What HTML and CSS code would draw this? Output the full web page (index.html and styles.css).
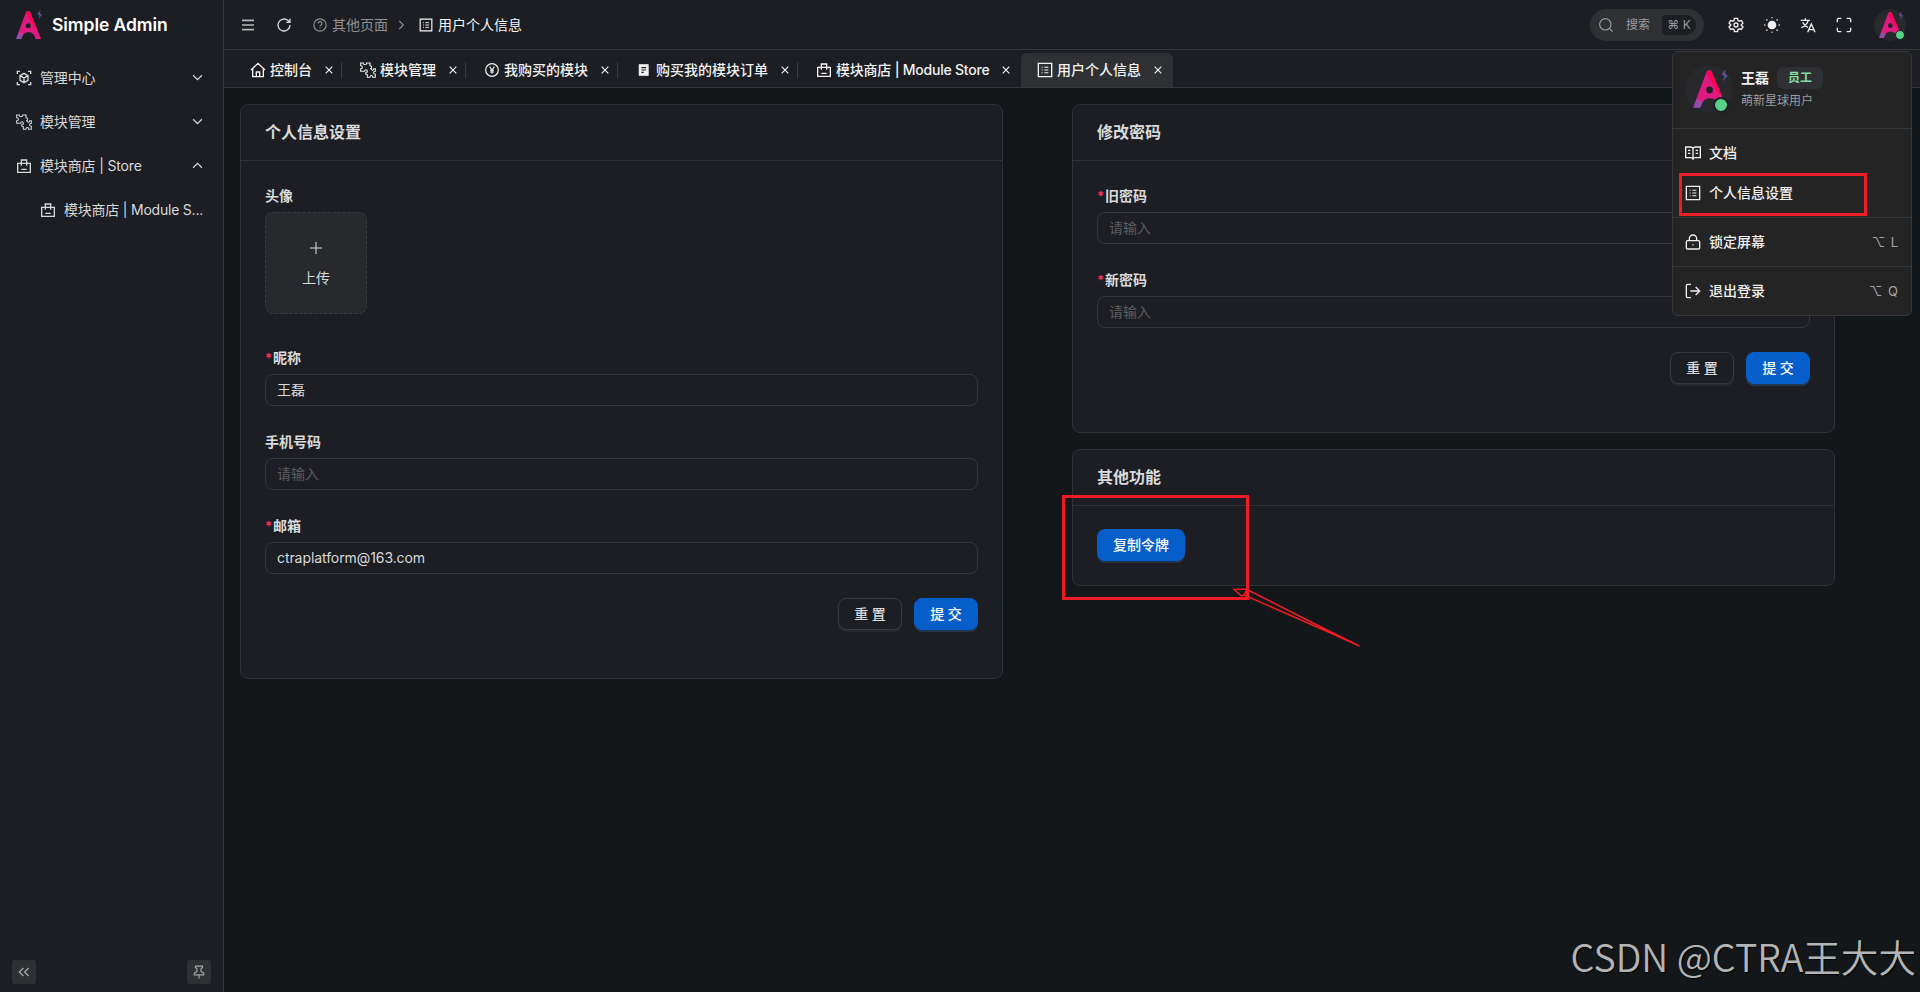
FILE: index.html
```
<!DOCTYPE html>
<html lang="zh-CN">
<head>
  <meta charset="UTF-8" />
  <meta name="viewport" content="width=device-width, initial-scale=1" />
  <title>用户个人信息 - Simple Admin</title>
  <link rel="stylesheet" href="styles.css">
</head>
<body>

<!-- icons -->
<svg class="sprite" width="0" height="0">
  <linearGradient id="logoFill" x1="0" y1="1" x2=".35" y2="0">
    <stop offset="0" stop-color="#8a4fb0" />
    <stop offset=".22" stop-color="#a04aa5" />
    <stop offset=".24" stop-color="#dd1c80" />
    <stop offset="1" stop-color="#e0187c" />
  </linearGradient>
  <symbol id="logo" viewBox="0 0 26 30">
    <path d="M10 2Q12 0 14 2L25 29H19.5Q18 22 12.5 22T5.500 29H0Z" fill="url(#logoFill)" />
    <path d="M10 3Q12 0 14 2L22 21Q18 18 16 13Z" fill="#fb0552" />
    <circle cx="12.300" cy="15.700" r="2.500" fill="#1f2024" />
    <path d="M24.500 0L21.300 4L23.500 5.500L22 9.500L26 4.800L23.800 3.500Z" fill="#5a5098" />
  </symbol>
  <symbol id="cube" viewBox="0 0 24 24"><path d="M2 6V2h4M18 2h4v4M22 18v4h-4M6 22H2v-4M12 5l6 3.500v7L12 19l-6-3.500v-7zM6 8.500l6 3.500 6-3.500M12 12v7" /></symbol>
  <symbol id="puzzle" viewBox="0 0 24 24"><path d="M1 1.500h4c0 3.500 5 3.500 5 0h5v4c3.500 0 3.500 4.500 0 4.500h2c0 3 3.500 3 3.500 0H23v4c-3.500 0-3.500 4.500 0 4.500V23h-4c0-3.500-4-3.500-4 0h-4v-4c-3.500 0-3.500-4 0-4v-1c0-3-4-3-4 0H1v-4c3.500 0 3.500-4.500 0-4.500z" stroke-width="1.600" /></symbol>
  <symbol id="bag" viewBox="0 0 24 24"><path d="M2.500 8h19v13.500h-19zM8 11.500V3h8v8.500M8 17h8" /></symbol>
  <symbol id="down" viewBox="0 0 24 24"><path d="M5 8.500l7 7 7-7" /></symbol>
  <symbol id="up" viewBox="0 0 24 24"><path d="M5 15.500l7-7 7 7" /></symbol>
  <symbol id="right" viewBox="0 0 24 24"><path d="M9 5l7 7-7 7" /></symbol>
  <symbol id="menu" viewBox="0 0 24 24"><path d="M3 5h18M3 12h18M3 19h18" stroke-width="2.400" /></symbol>
  <symbol id="refresh" viewBox="0 0 24 24"><path d="M21 12a9 9 0 1 1-3-6.700L21 8M21 2.500V8h-5.500" /></symbol>
  <symbol id="question" viewBox="0 0 24 24"><circle cx="12" cy="12" r="10.500" /><path d="M8.800 9.500a3.200 3.200 0 1 1 4.700 2.800q-1.500.8-1.500 2.200M12 16.500v1.500" /></symbol>
  <symbol id="profile" viewBox="0 0 24 24"><path d="M2 2h20v20H2z" /><path d="M7 8h1.500M7 12h1.500M7 16h1.500M11 8h6M11 12h6M11 16h6" stroke-width="1.600" /></symbol>
  <symbol id="home" viewBox="0 0 24 24"><path d="M1.500 12L12 2l10.500 10M4 10v12h16V10M9.500 22v-7h5v7" /></symbol>
  <symbol id="yen" viewBox="0 0 24 24"><circle cx="12" cy="12" r="9.500" stroke-width="1.800" /><path d="M8.500 7l3.500 5 3.500-5M12 12v5.500M9 12.500h6M9 15h6" stroke-width="1.600" /></symbol>
  <symbol id="order" viewBox="0 0 24 24"><path d="M4 3h15v18H4z" fill="currentColor" /><path d="M7.500 8h8M7.500 12h8M7.500 16h4" stroke="#1c1e23" /></symbol>
  <symbol id="close" viewBox="0 0 24 24"><path d="M4 4l16 16M20 4L4 20" stroke-width="2.800" /></symbol>
  <symbol id="search" viewBox="0 0 24 24"><circle cx="11" cy="11" r="8.500" /><path d="M17 17l5 5" /></symbol>
  <symbol id="gear" viewBox="0 0 24 24"><path d="M9.700 2h4.600l.7 3.200 2 1.100 3.100-1 2.300 4-2.400 2.200v1l2.400 2.200-2.300 4-3.100-1-2 1.100-.7 3.200H9.700L9 18.800l-2-1.100-3.100 1-2.300-4L4 12.500v-1L1.600 9.300l2.300-4 3.100 1 2-1.100z" /><circle cx="12" cy="12" r="3" /></symbol>
  <symbol id="sun" viewBox="0 0 24 24"><circle cx="12" cy="12" r="6.500" fill="currentColor" stroke="none" /><path d="M12 1v.3M12 22.700v.3M1 12h.3M22.700 12h.3M4.200 4.200l.3.300M19.500 19.500l.3.300M4.200 19.800l.3-.3M19.500 4.500l.3-.3" stroke-linecap="round" /></symbol>
  <symbol id="lang" viewBox="0 0 24 24"><path d="M1 5h14M8 2v3M12.500 5C11 10 7 14 2 16M4 8c2 4 5 6 8 7.500M11.500 23L17 10.500 22.500 23M13.500 19h7" /></symbol>
  <symbol id="full" viewBox="0 0 24 24"><path d="M2 8V4a2 2 0 0 1 2-2h4M16 2h4a2 2 0 0 1 2 2v4M22 16v4a2 2 0 0 1-2 2h-4M8 22H4a2 2 0 0 1-2-2v-4" /></symbol>
  <symbol id="book" viewBox="0 0 24 24"><path d="M12 5v17M12 5C11 3 9 3 8 3H1v16h8q2 0 3 2 1-2 3-2h8V3h-7c-1 0-3 0-4 2M4.500 8H8M4.500 12.500H8M16 8h3.500M16 12.500h3.500" /></symbol>
  <symbol id="lock" viewBox="0 0 24 24"><rect x="2" y="10" width="20" height="12.500" rx="2" /><path d="M6.500 10V7a5.500 5.500 0 0 1 11 0v3M12 15.200v2" /></symbol>
  <symbol id="logout" viewBox="0 0 24 24"><path d="M9 2H4a2 2 0 0 0-2 2v16a2 2 0 0 0 2 2h5M8 12h14M16 6l6 6-6 6" /></symbol>
  <symbol id="collapse" viewBox="0 0 24 24"><path d="M11 5l-7 7 7 7M20 5l-7 7 7 7" stroke-width="2.400" /></symbol>
  <symbol id="pin" viewBox="0 0 24 24"><path d="M12 17v6M6 2h12v2.500l-2.500 1.500v5L20 14v3H4v-3l4.500-3V6L6 4.500z" /></symbol>
  <symbol id="plus" viewBox="0 0 24 24"><path d="M12 3v18M3 12h18" /></symbol>
</svg>

<div class="layout">
  <aside class="sidebar">
    <div class="brand">
      <svg><use href="#logo" /></svg>
      <span>Simple Admin</span>
    </div>
    <ul class="menu">
      <li><svg class="icon"><use href="#cube" /></svg><span>管理中心</span><svg class="icon arrow"><use href="#down" /></svg></li>
      <li><svg class="icon"><use href="#puzzle" /></svg><span>模块管理</span><svg class="icon arrow"><use href="#down" /></svg></li>
      <li><svg class="icon"><use href="#bag" /></svg><span>模块商店 | Store</span><svg class="icon arrow"><use href="#up" /></svg></li>
      <li class="sub"><svg class="icon"><use href="#bag" /></svg><span>模块商店 | Module S...</span></li>
    </ul>
    <div class="sidebar-footer">
      <button><svg class="icon"><use href="#collapse" /></svg></button>
      <button><svg class="icon"><use href="#pin" /></svg></button>
    </div>
  </aside>

  <div class="main">
    <header class="header">
      <svg class="icon toggle"><use href="#menu" /></svg>
      <svg class="icon reload"><use href="#refresh" /></svg>
      <div class="breadcrumb">
        <svg class="icon"><use href="#question" /></svg>
        <span>其他页面</span>
        <svg class="icon sep"><use href="#right" /></svg>
        <svg class="icon current"><use href="#profile" /></svg>
        <span class="current">用户个人信息</span>
      </div>
      <div class="tools">
        <div class="search">
          <svg class="icon"><use href="#search" /></svg>
          <span>搜索</span>
          <kbd>⌘ K</kbd>
        </div>
        <svg class="icon"><use href="#gear" /></svg>
        <svg class="icon"><use href="#sun" /></svg>
        <svg class="icon"><use href="#lang" /></svg>
        <svg class="icon"><use href="#full" /></svg>
        <div class="avatar"><svg><use href="#logo" /></svg><i></i></div>
      </div>
    </header>

    <nav class="tabs">
      <div class="tab"><svg class="icon"><use href="#home" /></svg><span>控制台</span><svg class="icon x"><use href="#close" /></svg></div>
      <div class="tab"><svg class="icon"><use href="#puzzle" /></svg><span>模块管理</span><svg class="icon x"><use href="#close" /></svg></div>
      <div class="tab"><svg class="icon"><use href="#yen" /></svg><span>我购买的模块</span><svg class="icon x"><use href="#close" /></svg></div>
      <div class="tab"><svg class="icon small"><use href="#order" /></svg><span>购买我的模块订单</span><svg class="icon x"><use href="#close" /></svg></div>
      <div class="tab last"><svg class="icon"><use href="#bag" /></svg><span class="store">模块商店 | Module Store</span><svg class="icon x"><use href="#close" /></svg></div>
      <div class="tab active"><svg class="icon"><use href="#profile" /></svg><span>用户个人信息</span><svg class="icon x"><use href="#close" /></svg></div>
    </nav>

    <main class="content">
      <section class="card profile">
        <h2>个人信息设置</h2>
        <div class="card-body">
          <label>头像</label>
          <div class="upload">
            <svg class="icon"><use href="#plus" /></svg>
            <span>上传</span>
          </div>
          <label class="required">昵称</label>
          <input type="text" value="王磊">
          <label>手机号码</label>
          <input type="text" placeholder="请输入">
          <label class="required">邮箱</label>
          <input type="text" value="ctraplatform@163.com">
          <div class="actions">
            <button class="btn">重 置</button>
            <button class="btn primary">提 交</button>
          </div>
        </div>
      </section>

      <div class="column">
        <section class="card password">
          <h2>修改密码</h2>
          <div class="card-body">
            <label class="required">旧密码</label>
            <input type="text" placeholder="请输入">
            <label class="required">新密码</label>
            <input type="text" placeholder="请输入">
            <div class="actions">
              <button class="btn">重 置</button>
              <button class="btn primary">提 交</button>
            </div>
          </div>
        </section>
        <section class="card other">
          <h2>其他功能</h2>
          <div class="card-body">
            <button class="btn primary copy">复制令牌</button>
          </div>
        </section>
      </div>
    </main>
  </div>
</div>

<!-- user dropdown -->
<div class="dropdown">
  <div class="user">
    <div class="avatar big"><svg><use href="#logo" /></svg><i></i></div>
    <div class="user-info">
      <div class="name">王磊<span class="badge">员工</span></div>
      <p>萌新星球用户</p>
    </div>
  </div>
  <div class="group">
    <div class="item"><svg class="icon"><use href="#book" /></svg>文档</div>
    <div class="item"><svg class="icon"><use href="#profile" /></svg>个人信息设置</div>
  </div>
  <div class="group">
    <div class="item"><svg class="icon"><use href="#lock" /></svg>锁定屏幕<kbd>⌥ L</kbd></div>
  </div>
  <div class="group">
    <div class="item"><svg class="icon"><use href="#logout" /></svg>退出登录<kbd>⌥ Q</kbd></div>
  </div>
</div>

<!-- annotations -->
<div class="mark mark-menu"></div>
<div class="mark mark-copy"></div>
<svg class="mark-arrow" viewBox="0 0 130 62">
  <path d="M128.500 58L95 43 13 7M128.500 58L88 38 17 2M13 7L10.500 8 3 1.500 16 1 14.500 4Z" />
</svg>
<div class="watermark">CSDN @CTRA王大大</div>

</body>
</html>
```

FILE: styles.css
```
* {
  box-sizing: border-box;
}
body {
  margin: 0;
  height: 992px;
  overflow: hidden;
  position: relative;
  background: #13171a;
  color: #d9dadb;
  font-family: Inter, "Noto Sans CJK SC", sans-serif;
  font-size: 14px;
  line-height: 20px;
}
button, input {
  font-family: inherit;
  font-size: 14px;
}
.sprite {
  position: absolute;
}
.icon {
  width: 16px;
  height: 16px;
  flex: none;
  fill: none;
  stroke: currentColor;
  stroke-width: 2;
}
.layout {
  display: flex;
  height: 100%;
}

/* sidebar */
.sidebar {
  width: 224px;
  flex: none;
  display: flex;
  flex-direction: column;
  background: #1c1e23;
  border-right: 1px solid #36373c;
}
.brand {
  height: 50px;
  display: flex;
  align-items: center;
  gap: 10px;
  padding-left: 16px;
  color: #fff;
  font-size: 17.500px;
  font-weight: 600;
  letter-spacing: -0.060px;
}
.brand svg {
  width: 26px;
  height: 30px;
}
.menu {
  list-style: none;
  margin: 6px 0 0;
  padding: 0 0 1px;
  color: #d8d9db;
}
.menu li {
  height: 44px;
  display: flex;
  align-items: center;
  gap: 8px;
  padding: 0 18px 1px 16px;
  letter-spacing: -0.150px;
}
.menu span {
  flex: 1;
  white-space: nowrap;
}
.menu .arrow {
  width: 15px;
  height: 15px;
}
.menu .sub {
  padding-left: 40px;
  padding-right: 0;
  letter-spacing: -0.220px;
}
.sidebar-footer {
  margin-top: auto;
  padding: 0 12px 8px;
  display: flex;
  justify-content: space-between;
}
.sidebar-footer button {
  width: 24px;
  height: 24px;
  padding: 0;
  display: flex;
  align-items: center;
  justify-content: center;
  border: none;
  border-radius: 3px;
  background: #2e3033;
  color: #a3a4a7;
}
.sidebar-footer .icon {
  width: 14px;
  height: 14px;
}

/* header */
.main {
  flex: 1;
  min-width: 0;
}
.header {
  height: 50px;
  display: flex;
  align-items: center;
  padding: 0 14px 0 16px;
  background: #1c1e23;
  border-bottom: 1px solid #36373c;
}
.header .toggle {
  margin-right: 20px;
  color: #b4b5b7;
}
.header .reload {
  margin-right: 21px;
}
.breadcrumb {
  display: flex;
  align-items: center;
  gap: 5px;
  color: #8f9093;
}
.breadcrumb .icon {
  width: 14px;
  height: 14px;
}
.breadcrumb .sep {
  margin: 0 6px 0 1px;
}
.breadcrumb .current {
  color: #f5f5f5;
}
.tools {
  margin-left: auto;
  display: flex;
  align-items: center;
  gap: 20px;
  color: #eee;
}
.search {
  display: flex;
  align-items: center;
  width: 114px;
  height: 32px;
  margin-right: 4px;
  padding: 0 8px;
  border-radius: 16px;
  background: #2e3033;
  color: #9b9c9f;
  font-size: 12px;
}
.search span {
  margin: 0 12px;
  white-space: nowrap;
}
.search .icon {
  stroke-width: 1.800;
}
kbd {
  font-family: Inter, "DejaVu Sans", sans-serif;
}
.search kbd {
  width: 34px;
  height: 20px;
  flex: none;
  border-radius: 4px 10px 10px 4px;
  background: #1c1e23;
  text-align: center;
  white-space: nowrap;
}
.avatar {
  position: relative;
  width: 32px;
  height: 32px;
  margin-left: 2px;
  display: flex;
  align-items: center;
  justify-content: center;
  border-radius: 50%;
  background: #28292c;
}
.avatar svg {
  width: 24px;
  height: 28px;
  margin-left: 2px;
}
.avatar i {
  position: absolute;
  right: 1px;
  bottom: 1px;
  width: 10px;
  height: 10px;
  border: 1px solid #1c1e23;
  border-radius: 50%;
  background: #57d188;
}

/* tabs */
.tabs {
  height: 38px;
  display: flex;
  align-items: flex-end;
  padding-left: 8px;
  background: #1c1e23;
  border-bottom: 1px solid #36373c;
  color: #f2f2f2;
  font-weight: 500;
}
.tab {
  position: relative;
  height: 34px;
  display: flex;
  align-items: center;
  padding: 0 12px 0 18px;
}
.tab span {
  margin: 0 12px 0 4px;
  white-space: nowrap;
}
.tab .x {
  width: 10px;
  height: 10px;
  margin-right: -4px;
}
.tab .small {
  padding: 1px;
}
.tab::after {
  content: "";
  position: absolute;
  right: 0;
  top: 9px;
  width: 1px;
  height: 16px;
  background: #3a3b3f;
}
.tab .store {
  width: 153px;
  letter-spacing: -0.220px;
}
.tab.last::after, .tab.active::after {
  display: none;
}
.tab.active {
  background: #2e3033;
  border-radius: 6px 6px 0 0;
  margin-left: 2px;
  padding: 0 14px 0 16px;
}

/* cards */
.content {
  display: flex;
  align-items: flex-start;
  justify-content: space-between;
  padding: 16px 85px 0 16px;
}
.card {
  width: 763px;
  background: #1c1e23;
  border: 1px solid #303236;
  border-radius: 8px;
}
.card h2 {
  margin: 0;
  height: 56px;
  padding: 0 24px;
  border-bottom: 1px solid #303236;
  font-size: 16px;
  font-weight: 600;
  line-height: 55px;
}
.card-body {
  padding: 23px 24px;
}
.profile {
  height: 575px;
}
.column {
  display: flex;
  flex-direction: column;
  gap: 16px;
}
.password {
  height: 329px;
}
.other {
  height: 137px;
}
.card label {
  display: block;
  height: 20px;
  margin: 0 0 6px;
  font-weight: 600;
}
.profile .card-body, .password .card-body {
  padding-top: 25px;
}
.required::before {
  content: "*";
  display: inline-block;
  width: 8px;
  color: #f5315b;
  font-size: 13px;
  font-weight: 700;
  line-height: 1;
}
.card input {
  display: block;
  width: 100%;
  height: 32px;
  margin-bottom: 26px;
  padding: 0 11px 2px;
  background: transparent;
  border: 1px solid #36373b;
  border-radius: 8px;
  color: #d9dadb;
  letter-spacing: -0.080px;
}
.card input::placeholder {
  color: #5c5d60;
}
.upload {
  width: 102px;
  height: 102px;
  margin-bottom: 34px;
  padding-top: 2px;
  display: flex;
  flex-direction: column;
  align-items: center;
  justify-content: center;
  gap: 12px;
  background: #28292c;
  border: 1px dashed #3a3b3f;
  border-radius: 8px;
}
.upload .icon {
  stroke-width: 1.600;
}
.actions {
  display: flex;
  justify-content: flex-end;
  gap: 12px;
  margin-top: -2px;
}
.btn {
  width: 64px;
  height: 32px;
  padding: 0 0 2px;
  border: 1px solid #3a3b3f;
  border-radius: 8px;
  background: #1c1e23;
  box-shadow: 0 2px 0 #26282c;
  color: #d9dadb;
  font-weight: 500;
}
.btn.primary {
  border-color: #065ecb;
  background: #065ecb;
  box-shadow: 0 2px 0 #24354f;
  color: #fff;
}
.btn.copy {
  display: block;
  width: 88px;
}

/* user dropdown */
.dropdown {
  position: absolute;
  left: 1672px;
  top: 51px;
  width: 240px;
  height: 265px;
  background: #242424;
  border: 1px solid #36373b;
  border-radius: 6px;
  color: #f0f0f0;
  font-weight: 500;
}
.user {
  height: 76px;
  display: flex;
  align-items: center;
  padding: 0 0 2px 12px;
}
.avatar.big {
  width: 48px;
  height: 48px;
  margin: 0 8px 0 0;
}
.avatar.big svg {
  width: 35px;
  height: 40px;
  margin-left: 2px;
}
.avatar.big i {
  right: 4px;
  bottom: 0;
  width: 16px;
  height: 16px;
  border-width: 2px;
}
.name {
  display: flex;
  align-items: center;
  font-weight: 600;
}
.badge {
  width: 46px;
  height: 22px;
  margin-left: 8px;
  border-radius: 6px;
  background: #2e3033;
  color: #86dda8;
  font-size: 12px;
  font-weight: 600;
  line-height: 22px;
  text-align: center;
}
.user-info p {
  margin: 2px 0 0;
  color: #9b9c9f;
  font-size: 12px;
  font-weight: 400;
}
.group {
  padding: 4px;
  border-top: 1px solid #36373b;
}
.group .item {
  height: 40px;
  display: flex;
  align-items: center;
  gap: 8px;
  padding: 0 8px;
}
.item kbd {
  margin-left: auto;
  color: #a3a4a7;
  font-size: 13px;
  font-weight: 400;
  letter-spacing: 1px;
}

/* annotations */
.mark {
  position: absolute;
  border: 3px solid #ef1c26;
}
.mark-menu {
  left: 1679px;
  top: 173px;
  width: 188px;
  height: 43px;
}
.mark-copy {
  left: 1062px;
  top: 495px;
  width: 187px;
  height: 105px;
}
.mark-arrow {
  position: absolute;
  left: 1231px;
  top: 588px;
  width: 130px;
  height: 62px;
  fill: none;
  stroke: #ef1c26;
  stroke-width: 1.500;
}
.watermark {
  position: absolute;
  right: 4px;
  top: 931px;
  color: #b3b4b5;
  font-family: "Noto Sans CJK SC", sans-serif;
  font-size: 37.600px;
  font-weight: 350;
  line-height: 50px;
  white-space: nowrap;
  text-shadow: 1px 1px 1px #000;
}
```
